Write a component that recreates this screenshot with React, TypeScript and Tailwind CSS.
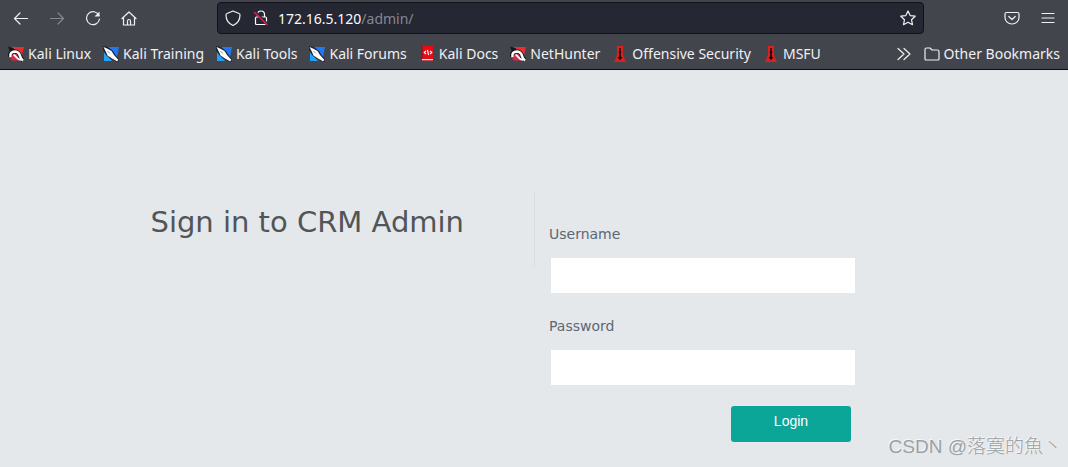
import React from 'react';

type IconKind = 'dragon' | 'tool' | 'book' | 'msf';

const bookmarks: { label: string; icon: IconKind }[] = [
  { label: 'Kali Linux', icon: 'dragon' },
  { label: 'Kali Training', icon: 'tool' },
  { label: 'Kali Tools', icon: 'tool' },
  { label: 'Kali Forums', icon: 'tool' },
  { label: 'Kali Docs', icon: 'book' },
  { label: 'NetHunter', icon: 'dragon' },
  { label: 'Offensive Security', icon: 'msf' },
  { label: 'MSFU', icon: 'msf' },
];

function BookmarkIcon({ kind }: { kind: IconKind }) {
  if (kind === 'dragon') {
    return (
      <svg viewBox="0 0 16 16" className="size-4 shrink-0" aria-hidden="true">
        <path d="M4 1h12l-2.500 10H8z" fill="#ee2b2f" />
        <path d="M0 9l4 5.500h8L8 8z" fill="#d82a4c" />
        <path d="M0 .5l6 2-1 3H2z" fill="#15161b" />
        <path d="M2 10.500C1.500 7 4 5.200 7 5.500c3.500.3 4.500 2.500 5 4.500.5 2 1.500 3 3 4" fill="none" stroke="#15161b" strokeWidth="4.200" />
        <path d="M2.500 11C1.500 7.500 4 5.500 7 5.500c3.500.2 4.500 2.500 5 4.500.5 2 1.500 3.500 3 4.500" fill="none" stroke="#fff" strokeWidth="2.600" />
        <path d="M5.500 9c2.500 0 2.500 4.500 7.500 4.800" fill="none" stroke="#fff" strokeWidth="2" />
      </svg>
    );
  }
  if (kind === 'tool') {
    return (
      <svg viewBox="0 0 16 16" className="size-4 shrink-0" aria-hidden="true">
        <path d="M3.500 1H16l-2.500 13H9z" fill="#2377f4" />
        <path d="M1 6l8 9H1z" fill="#21a1fa" />
        <path d="M0 0l5 1 5 4 2.500 4L16 13v2.500h-3l-5-2.500-5-4L0 4z" fill="#1d2330" />
        <path d="M.5 1L4 2.500 8.500 5l2.500 4 4.500 5-1.500 1.200-5-2.700L4.500 9.500 3 6z" fill="#fff" />
        <path d="M4.500 5l2.500 2.500" stroke="#8290a4" strokeWidth="1" />
      </svg>
    );
  }
  if (kind === 'book') {
    return (
      <svg viewBox="0 0 16 16" className="size-4 shrink-0" aria-hidden="true">
        <path d="M2 0h12v13H2z" fill="#e30d17" />
        <path d="M2 0h2v13H2z" fill="#b00d17" />
        <path d="M2.500 13H14v1.500H3z" fill="#e9e4e4" />
        <path d="M2 12.500h1v2h11v1.300H2z" fill="#c90f18" />
        <path d="M7 4.800L5.200 6.500 7 8.200M11 4.800l1.800 1.700L11 8.200M8.400 4l1.200 5" stroke="#fff" strokeWidth="1.100" fill="none" />
      </svg>
    );
  }
  return (
    <svg viewBox="0 0 16 16" className="size-4 shrink-0" aria-hidden="true">
      <path d="M5 0h6v9l3 7H2l3-7z" fill="#dc2020" />
      <path d="M7.300 2h1.400v3l.8 1-.7 1v3.500l1.700 1.500-1.500.5L8 14.500 7 12.500 5.500 12l1.700-1.500V7l-.7-1 .8-1z" fill="#160607" />
    </svg>
  );
}

function Glyph({ children }: { children: React.ReactNode }) {
  return (
    <svg
      viewBox="0 0 16 16"
      className="size-4 shrink-0"
      fill="none"
      stroke="currentColor"
      strokeWidth="1.2"
      strokeLinecap="round"
      strokeLinejoin="round"
      aria-hidden="true"
    >
      {children}
    </svg>
  );
}

function Toolbar() {
  return (
    <div className="flex h-9 items-center justify-between px-3">
      <div className="flex items-center gap-5 pl-px">
        <button type="button" aria-label="Back">
          <Glyph><path d="M14.500 8.500h-13M7 3L1.500 8.500 7 14" /></Glyph>
        </button>
        <button type="button" aria-label="Forward" className="text-[#85868b]">
          <Glyph><path d="M1.500 8.500h13M9 3l5.500 5.500L9 14" /></Glyph>
        </button>
        <button type="button" aria-label="Reload">
          <Glyph>
            <path d="M14 5.500A6.500 6.500 0 1 0 14.500 9" />
            <path d="M14.500 1.500v5h-5z" fill="currentColor" stroke="none" />
          </Glyph>
        </button>
        <button type="button" aria-label="Home">
          <Glyph>
            <path d="M1 8.500L8 2l7 6.500M2.500 7.500V15h11V7.500M6.500 15v-4a1.500 1.500 0 0 1 3 0v4" />
          </Glyph>
        </button>
      </div>
      <div className="mr-20 ml-20 flex h-8 flex-1 items-center rounded border border-[#101119] bg-[#252733] px-[7px]">
        <Glyph><path d="M8 1l6 2.500c.8.300 1 .7 1 1.500 0 5-2.500 8.500-7 10.500C3.500 13.500 1 10 1 5c0-.8.200-1.200 1-1.500z" /></Glyph>
        <svg viewBox="0 0 16 16" className="ml-3 size-4 shrink-0" fill="none" stroke="#fbfbfe" strokeWidth="1.2" aria-hidden="true">
          <path d="M4.500 7V4.500a3.500 3.500 0 0 1 7 0V7M3.500 7h9a1 1 0 0 1 1 1v5.500a1 1 0 0 1-1 1h-9a1 1 0 0 1-1-1V8a1 1 0 0 1 1-1z" />
          <path d="M1.500 1.500l13 13" stroke="#252733" strokeWidth="3" />
          <path d="M1 2l13.500 13" stroke="#e3214e" strokeWidth="1.400" />
        </svg>
        <div className="ml-[9px] flex min-w-0 flex-1 items-center pt-0.5 text-sm leading-5">
          <span className="text-[#fbfbfe]">172.16.5.120</span>
          <span className="text-[#85868f]">/admin/</span>
        </div>
        <button type="button" aria-label="Bookmark this page">
          <Glyph><path d="M8 1l2.200 4.600 5 .6-3.700 3.500 1 5L8 12.200l-4.500 2.500 1-5L.8 6.200l5-.6z" /></Glyph>
        </button>
      </div>
      <div className="flex items-center gap-5">
        <button type="button" aria-label="Save to Pocket">
          <Glyph>
            <path d="M2.500 2.500h11a1.500 1.500 0 0 1 1.500 1.500v3.500a7 6.500 0 0 1-14 0V4a1.500 1.500 0 0 1 1.500-1.500zM4.800 6.500L8 9.500l3.200-3" />
          </Glyph>
        </button>
        <button type="button" aria-label="Open application menu">
          <Glyph><path d="M2 3.500h12M2 8h12M2 12.500h12" /></Glyph>
        </button>
      </div>
    </div>
  );
}

function BookmarksBar() {
  return (
    <nav className="flex h-[33px] items-center justify-between px-2 pt-0.5 text-sm leading-5" aria-label="Bookmarks">
      <div className="flex min-w-0 items-center gap-3">
        {bookmarks.map((b) => (
          <a key={b.label} href="#" className="flex items-center gap-1 whitespace-nowrap">
            <BookmarkIcon kind={b.icon} />
            {b.label}
          </a>
        ))}
      </div>
      <div className="flex items-center gap-3">
        <button type="button" aria-label="Show more bookmarks">
          <Glyph><path d="M2 2.500L8 8l-6 5.500M8 2.500L14 8l-6 5.500" /></Glyph>
        </button>
        <a href="#" className="flex items-center gap-1 whitespace-nowrap">
          <Glyph><path d="M1 13V3.500A1.500 1.500 0 0 1 2.500 2H6l2 2h5.500A1.500 1.500 0 0 1 15 5.500V13a1 1 0 0 1-1 1H2a1 1 0 0 1-1-1z" /></Glyph>
          Other Bookmarks
        </a>
      </div>
    </nav>
  );
}

function Field({ id, label, type }: { id: string; label: string; type: string }) {
  return (
    <div className="flex flex-col">
      <label htmlFor={id} className="text-sm leading-5 text-[#5c6773]">{label}</label>
      <input id={id} type={type} className="mt-3.5 mb-[23px] ml-0.5 h-[35px] w-[304px] bg-white px-3 text-sm outline-none" />
    </div>
  );
}

export default function App() {
  return (
    <div className="flex min-h-screen flex-col bg-[#e4e8eb] font-['DejaVu_Sans',sans-serif]">
      <header className="border-b border-[#0c0c0d] bg-[#43454c] font-['Noto_Sans',sans-serif] text-[#f0f0f3]">
        <Toolbar />
        <BookmarksBar />
      </header>
      <main className="relative grid flex-1 grid-cols-2 items-start pt-[122px]">
        <h1 className="pt-2.5 pr-[70px] text-right text-[29px] leading-10 text-[#515558]">Sign in to CRM Admin</h1>
        <div className="flex">
          <div className="h-[75px] w-px bg-[#dadcde]" />
          <form className="flex w-[320px] flex-col pt-8 pl-3.5" onSubmit={(e) => e.preventDefault()}>
            <Field id="username" label="Username" type="text" />
            <Field id="password" label="Password" type="password" />
            <button
              type="submit"
              className="-mt-0.5 mr-1 h-9 w-[120px] self-end rounded-[3px] bg-[#0ca699] pb-1.5 font-['Liberation_Sans',sans-serif] text-sm text-white"
            >
              Login
            </button>
          </form>
        </div>
        <p className="absolute right-1.5 bottom-1.5 font-['Liberation_Sans','Noto_Sans_CJK_SC',sans-serif] text-[19px] leading-7 font-light text-[#9da0a2] [text-shadow:-1px_-1px_0_#f6f7f8]">
          CSDN @落寞的魚丶
        </p>
      </main>
    </div>
  );
}
